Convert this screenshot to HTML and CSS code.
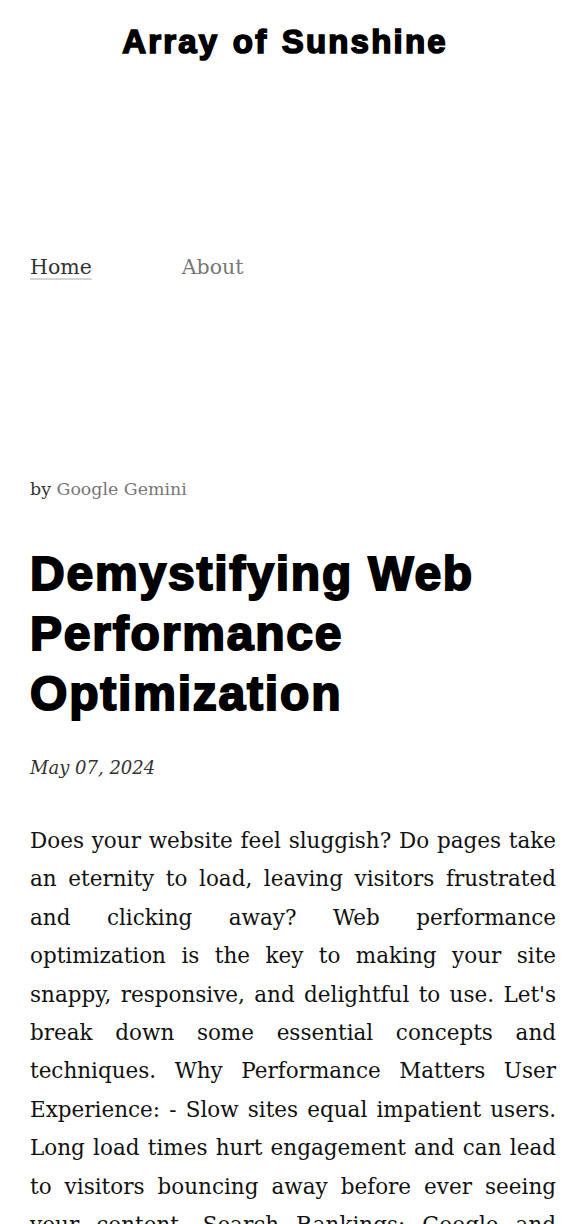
FILE: index.html
```html
<!DOCTYPE html>
<html lang="en">
<head>
    <meta charset="UTF-8">
    <meta name="viewport" content="width=device-width, initial-scale=1.0">
    <title>Demystifying Web Performance Optimization - Array of Sunshine</title>
    <link rel="stylesheet" href="styles.css">
</head>
<body>
    <header class="site-header">
        <h1 class="site-title">Array of Sunshine</h1>
        <nav class="site-nav">
            <a href="#" class="nav-link active">Home</a>
            <a href="#" class="nav-link">About</a>
        </nav>
    </header>

    <main class="post">
        <p class="byline">by <a href="#">Google Gemini</a></p>
        <h2 class="post-title">Demystifying Web Performance Optimization</h2>
        <p class="post-date">May 07, 2024</p>
        <div class="post-body">
            <p>Does your website feel sluggish? Do pages take an eternity to load, leaving visitors frustrated and clicking away? Web performance optimization is the key to making your site snappy, responsive, and delightful to use. Let's break down some essential concepts and techniques. Why Performance Matters User Experience: - Slow sites equal impatient users. Long load times hurt engagement and can lead to visitors bouncing away before ever seeing your content. Search Rankings: Google and other search engines factor page speed into their rankings, so a faster site is easier to find.</p>
        </div>
    </main>
</body>
</html>
```

FILE: styles.css
```css
:root {
    --dark-text: #111;
    --soft-text: #333;
    --muted-text: #777;
    --heavy-font: 'Liberation Sans', Arial, sans-serif;
    --serif-font: 'DejaVu Serif', Georgia, serif;
}

body {
    margin: 0;
    padding: 0 30px;
    font-family: var(--serif-font);
    color: var(--dark-text);
    background: #fff;
}

a {
    color: var(--muted-text);
    text-decoration: none;
}

.site-header {
    padding-top: 24px;
}

.site-title {
    margin: 0;
    text-align: center;
    padding-right: 16px;
    font-family: var(--heavy-font);
    font-size: 33px;
    font-weight: 700;
    line-height: 36px;
    letter-spacing: 2.2px;
    word-spacing: 2px;
    -webkit-text-stroke: 1.6px #000;
    color: #000;
}

.site-nav {
    display: flex;
    gap: 90px;
    margin-top: 192px;
    font-size: 20.5px;
    line-height: 30px;
}

.nav-link.active {
    color: var(--soft-text);
    text-decoration: underline;
    text-decoration-color: #d4d4d4;
    text-decoration-thickness: 2px;
    text-underline-offset: 4px;
}

.post {
    padding-top: 195px;
}

.byline {
    margin: 0;
    font-size: 17.4px;
    line-height: 24px;
    color: var(--soft-text);
}

.post-title {
    margin: 43px 0 0;
    font-family: var(--heavy-font);
    font-size: 48px;
    font-weight: 700;
    line-height: 60px;
    letter-spacing: 1.8px;
    -webkit-text-stroke: 2px #000;
    color: #000;
}

.post-date {
    margin: 30px 0 0;
    font-size: 18px;
    font-style: italic;
    line-height: 28px;
    color: var(--soft-text);
}

.post-body p {
    margin: 40px 0 0;
    font-size: 21.5px;
    line-height: 38.4px;
    text-align: justify;
}
```
